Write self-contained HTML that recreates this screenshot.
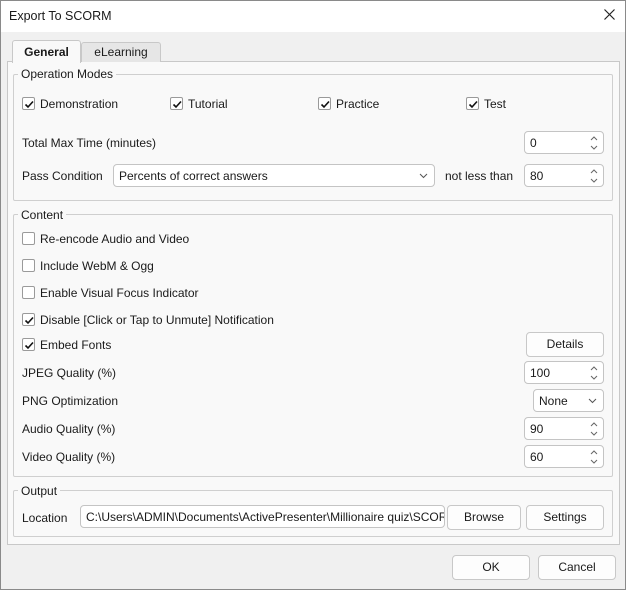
<!DOCTYPE html>
<html><head><style>
*{box-sizing:border-box;margin:0;padding:0}
body{width:626px;height:590px;background:#f0f0f0;font-family:"Liberation Sans",sans-serif;font-size:12px;color:#1a1a1a;position:relative;overflow:hidden}
.a{position:absolute;white-space:nowrap}
.win{position:absolute;left:0;top:0;width:626px;height:590px;border:1px solid #8a8a8a;}
.title{position:absolute;left:1px;top:1px;width:624px;height:31px;background:#fff}
.pane{position:absolute;left:7px;top:61px;width:613px;height:484px;background:#f9f9f9;border:1px solid #c8c8c8}
.grp{position:absolute;border:1px solid #cfcfcf;border-radius:2px}
.gl{position:absolute;background:#f9f9f9;padding:0 3px;white-space:nowrap}
.cb{position:absolute;width:13px;height:13px;border:1px solid #9a9a9a;border-radius:2px;background:#fff}
.cb svg{position:absolute;left:0;top:0}
.inp{position:absolute;height:23px;border:1px solid #c4c4c4;border-radius:4px;background:#fff;padding:4px 5px;white-space:nowrap;overflow:hidden}
.btn{position:absolute;height:25px;border:1px solid #c8c8c8;border-radius:4px;background:#fdfdfd;text-align:center;line-height:23px}
.spin{position:absolute;right:4px;top:3px}
</style></head><body>
<div class="win"></div>
<div class="title"></div>
<div class="a" style="left:9px;top:9px;font-size:12.5px">Export To SCORM</div>
<svg class="a" style="left:604px;top:9px" width="11" height="11"><path d="M0.5 0.5L10.5 10.5M10.5 0.5L0.5 10.5" stroke="#222" stroke-width="1.2"/></svg>

<div class="pane"></div>
<div class="a" style="left:81px;top:42px;width:80px;height:20px;background:#e6e6e6;border:1px solid #c8c8c8;border-bottom:none;border-radius:3px 3px 0 0;text-align:center;line-height:19px">eLearning</div>
<div class="a" style="left:12px;top:40px;width:69px;height:23px;background:#f9f9f9;border:1px solid #c8c8c8;border-bottom:none;border-radius:3px 3px 0 0;text-align:center;line-height:22px;font-weight:bold">General</div>

<div class="grp" style="left:13px;top:74px;width:600px;height:127px"></div>
<div class="gl" style="left:18px;top:67px">Operation Modes</div>
<div class="cb" style="left:22px;top:97px"><svg width="13" height="13"><path d="M2.5 6.5L5 9L10 3.5" stroke="#111" stroke-width="1.6" fill="none"/></svg></div>
<div class="a" style="left:40px;top:97px">Demonstration</div>
<div class="cb" style="left:170px;top:97px"><svg width="13" height="13"><path d="M2.5 6.5L5 9L10 3.5" stroke="#111" stroke-width="1.6" fill="none"/></svg></div>
<div class="a" style="left:188px;top:97px">Tutorial</div>
<div class="cb" style="left:318px;top:97px"><svg width="13" height="13"><path d="M2.5 6.5L5 9L10 3.5" stroke="#111" stroke-width="1.6" fill="none"/></svg></div>
<div class="a" style="left:336px;top:97px">Practice</div>
<div class="cb" style="left:466px;top:97px"><svg width="13" height="13"><path d="M2.5 6.5L5 9L10 3.5" stroke="#111" stroke-width="1.6" fill="none"/></svg></div>
<div class="a" style="left:484px;top:97px">Test</div>

<div class="a" style="left:22px;top:136px">Total Max Time (minutes)</div>
<div class="inp" style="left:524px;top:131px;width:80px">0<svg class="spin" width="10" height="16"><path d="M2 5L5 2L8 5M2 11L5 14L8 11" stroke="#666" fill="none"/></svg></div>
<div class="a" style="left:22px;top:169px">Pass Condition</div>
<div class="inp" style="left:113px;top:164px;width:322px">Percents of correct answers<svg class="a" style="right:6px;top:8px" width="9" height="6"><path d="M1 1L4.5 4.5L8 1" stroke="#555" fill="none"/></svg></div>
<div class="a" style="left:445px;top:169px">not less than</div>
<div class="inp" style="left:524px;top:164px;width:80px">80<svg class="spin" width="10" height="16"><path d="M2 5L5 2L8 5M2 11L5 14L8 11" stroke="#666" fill="none"/></svg></div>

<div class="grp" style="left:13px;top:214px;width:600px;height:263px"></div>
<div class="gl" style="left:18px;top:208px">Content</div>
<div class="cb" style="left:22px;top:232px"></div><div class="a" style="left:40px;top:232px">Re-encode Audio and Video</div>
<div class="cb" style="left:22px;top:259px"></div><div class="a" style="left:40px;top:259px">Include WebM &amp; Ogg</div>
<div class="cb" style="left:22px;top:286px"></div><div class="a" style="left:40px;top:286px">Enable Visual Focus Indicator</div>
<div class="cb" style="left:22px;top:313px"><svg width="13" height="13"><path d="M2.5 6.5L5 9L10 3.5" stroke="#111" stroke-width="1.6" fill="none"/></svg></div><div class="a" style="left:40px;top:313px">Disable [Click or Tap to Unmute] Notification</div>
<div class="cb" style="left:22px;top:338px"><svg width="13" height="13"><path d="M2.5 6.5L5 9L10 3.5" stroke="#111" stroke-width="1.6" fill="none"/></svg></div><div class="a" style="left:40px;top:338px">Embed Fonts</div>
<div class="btn" style="left:526px;top:332px;width:78px">Details</div>
<div class="a" style="left:22px;top:366px">JPEG Quality (%)</div>
<div class="inp" style="left:524px;top:361px;width:80px">100<svg class="spin" width="10" height="16"><path d="M2 5L5 2L8 5M2 11L5 14L8 11" stroke="#666" fill="none"/></svg></div>
<div class="a" style="left:22px;top:394px">PNG Optimization</div>
<div class="inp" style="left:533px;top:389px;width:71px">None<svg class="a" style="right:6px;top:8px" width="9" height="6"><path d="M1 1L4.5 4.5L8 1" stroke="#555" fill="none"/></svg></div>
<div class="a" style="left:22px;top:422px">Audio Quality (%)</div>
<div class="inp" style="left:524px;top:417px;width:80px">90<svg class="spin" width="10" height="16"><path d="M2 5L5 2L8 5M2 11L5 14L8 11" stroke="#666" fill="none"/></svg></div>
<div class="a" style="left:22px;top:450px">Video Quality (%)</div>
<div class="inp" style="left:524px;top:445px;width:80px">60<svg class="spin" width="10" height="16"><path d="M2 5L5 2L8 5M2 11L5 14L8 11" stroke="#666" fill="none"/></svg></div>

<div class="grp" style="left:13px;top:490px;width:600px;height:47px"></div>
<div class="gl" style="left:18px;top:484px">Output</div>
<div class="a" style="left:22px;top:511px">Location</div>
<div class="inp" style="left:80px;top:505px;width:365px;font-size:12px">C:\Users\ADMIN\Documents\ActivePresenter\Millionaire quiz\SCORM</div>
<div class="btn" style="left:447px;top:505px;width:74px">Browse</div>
<div class="btn" style="left:526px;top:505px;width:78px">Settings</div>

<div class="btn" style="left:452px;top:555px;width:78px">OK</div>
<div class="btn" style="left:538px;top:555px;width:78px">Cancel</div>
</body></html>
